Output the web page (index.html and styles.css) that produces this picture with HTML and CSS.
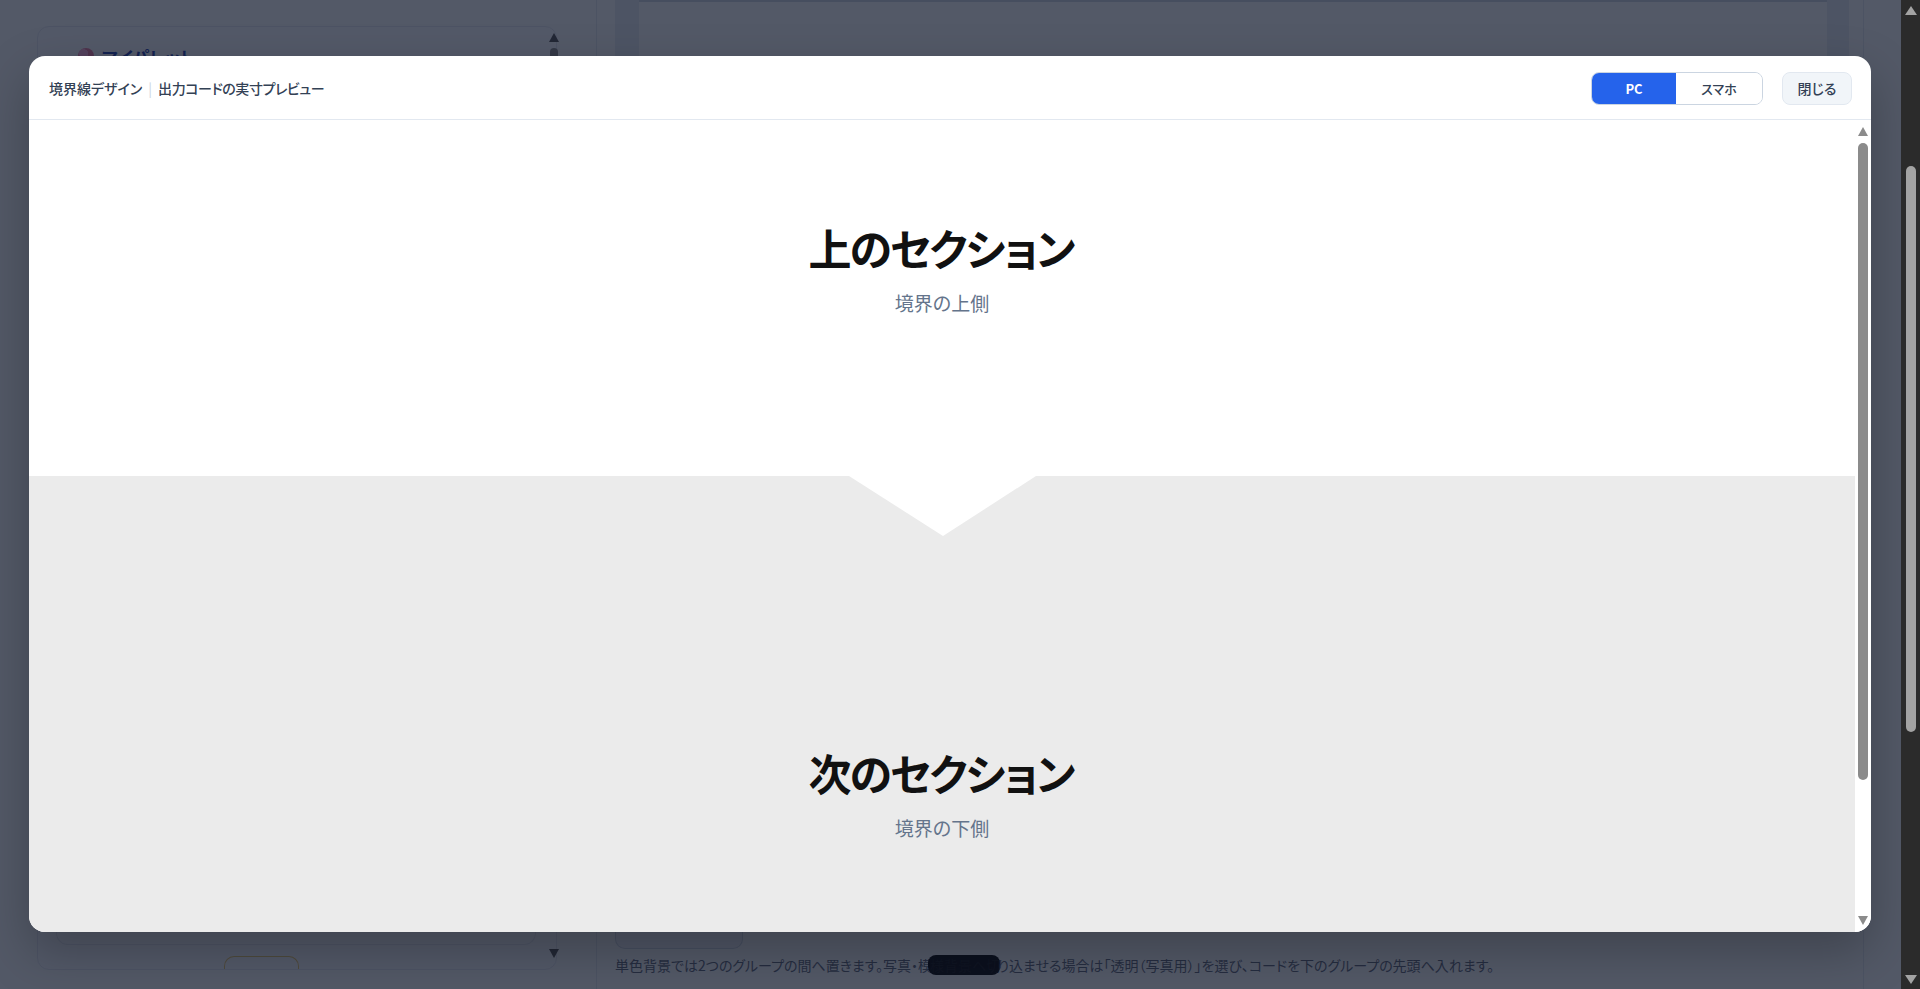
FILE: index.html
```html
<!DOCTYPE html>
<html lang="ja">
<head>
<meta charset="utf-8">
<title>境界線デザイン</title>
<link rel="stylesheet" href="styles.css">
</head>
<body>
<div class="app">
  <div class="page">
    <aside class="sidebar">
      <div class="panel">
        <div class="panel-head">
          <span class="palette-icon"></span>
          <span class="panel-title">マイパレット</span>
          <span class="panel-rule"></span>
        </div>
        <div class="panel-body">
          <div class="inner-box"></div>
        </div>
        <div class="panel-foot"><span class="tab"></span></div>
      </div>
      <div class="side-scroll">
        <span class="arr-up dark"></span>
        <span class="side-thumb"></span>
        <span class="grow"></span>
        <span class="arr-down dark"></span>
      </div>
    </aside>
    <main class="main">
      <div class="frame"><div class="frame-inner"></div></div>
      <div class="main-foot">
        <div class="ghost-btn"></div>
        <p class="note">単色背景では2つのグループの間へ置きます。写真・模<span class="pill">様背景へ切</span>り込ませる場合は「透明（写真用）」を選び、コードを下のグループの先頭へ入れます。</p>
      </div>
    </main>
    <div class="rightcol"></div>

    <div class="overlay"></div>

    <section class="modal">
      <header class="modal-head">
        <h1 class="modal-title">境界線デザイン<span class="sep">|</span><span class="title-b">出力コードの実寸プレビュー</span></h1>
        <div class="head-actions">
          <div class="seg">
            <button class="seg-btn active">PC</button>
            <button class="seg-btn">スマホ</button>
          </div>
          <button class="close-btn">閉じる</button>
        </div>
      </header>
      <div class="modal-body">
        <div class="preview">
          <div class="sec sec-top">
            <h2 class="sec-title">上のセクション</h2>
            <p class="sec-sub">境界の上側</p>
          </div>
          <div class="sec sec-bottom">
            <svg class="notch" width="187" height="60" viewBox="0 0 187 60"><polygon points="0,0 187,0 94,60" fill="#ffffff"/></svg>
            <h2 class="sec-title lower">次のセクション</h2>
            <p class="sec-sub">境界の下側</p>
          </div>
        </div>
        <div class="mscroll">
          <span class="arr-up"></span>
          <span class="mthumb"></span>
          <span class="grow"></span>
          <span class="arr-down"></span>
        </div>
      </div>
    </section>
  </div>
  <div class="bscroll">
    <span class="arr-up light"></span>
    <span class="bthumb"></span>
    <span class="grow"></span>
    <span class="arr-down light"></span>
  </div>
</div>
</body>
</html>
```

FILE: styles.css
```css
* { box-sizing: border-box; }
html, body { margin: 0; padding: 0; height: 100%; overflow: hidden; }
body {
  font-family: "Noto Sans CJK JP", "Noto Sans", sans-serif;
  font-feature-settings: "palt";
  background: #f8fafc;
}
.app { display: flex; width: 1920px; height: 989px; }
.page {
  position: relative;
  flex: 1;
  display: flex;
  height: 989px;
  background: #f8fafc;
  overflow: hidden;
}

/* ---------- underlying page ---------- */
.sidebar {
  width: 597px;
  flex: none;
  display: flex;
  padding: 26px 0 19px 37px;
  border-right: 1px solid #dfe5ee;
}
.panel {
  width: 520px;
  display: flex;
  flex-direction: column;
  border: 1px solid #e2e8f0;
  border-radius: 12px;
  background: #f9fbfd;
  padding: 18px 20px 0 40px;
}
.panel-head { display: flex; align-items: center; gap: 8px; height: 22px; }
.palette-icon {
  width: 16px; height: 16px; border-radius: 50%;
  background: radial-gradient(circle at 35% 35%, #f9a8d4 0 30%, #e879a0 31% 100%);
}
.panel-title { font-size: 17px; font-weight: 700; color: #1e40af; }
.panel-rule { flex: 1; height: 1px; background: #cbd5e1; margin-left: 8px; }
.panel-body { flex: 1; display: flex; flex-direction: column; justify-content: flex-end; }
.inner-box {
  height: 120px;
  margin-left: -22px;
  border: 1px solid #e2e8f0;
  border-top: none;
  border-radius: 0 0 12px 12px;
}
.panel-foot { height: 24px; display: flex; align-items: flex-end; padding-left: 146px; }
.tab {
  width: 75px; height: 13px;
  border: 1px solid #e8c66a;
  border-bottom: none;
  border-radius: 10px 10px 0 0;
}
.side-scroll {
  width: 14px;
  margin-left: -10px;
  display: flex;
  flex-direction: column;
  align-items: center;
  padding: 7px 0 12px;
}
.side-thumb { width: 8px; height: 60px; border-radius: 4px; background: #8b8b8b; margin-top: 6px; }
.grow { flex: 1; }

.arr-up, .arr-down { width: 0; height: 0; border-left: 5.5px solid transparent; border-right: 5.5px solid transparent; }
.arr-up { border-bottom: 9px solid #8b8b8b; }
.arr-down { border-top: 9px solid #8b8b8b; }
.arr-up.dark { border-bottom-color: #505050; }
.arr-down.dark { border-top-color: #505050; }
.arr-up.light { border-bottom-color: #a3a3a3; border-left-width: 6.5px; border-right-width: 6.5px; }
.arr-down.light { border-top-color: #a3a3a3; border-left-width: 6.5px; border-right-width: 6.5px; }

.main {
  flex: none;
  width: 1267px;
  display: flex;
  flex-direction: column;
  padding: 0 0 0 18px;
  border-right: 1px solid #dfe5ee;
}
.frame {
  height: 880px;
  width: 1234px;
  flex: none;
  background: #e4e9f2;
  padding: 0 22px 0 24px;
}
.frame-inner { height: 100%; background: #f8fafc; border-top: 2px solid #cbd5e1; }
.main-foot { flex: 1; }
.ghost-btn {
  width: 128px;
  height: 69px;
  border: 1px solid #cbd5e1;
  border-top: none;
  border-radius: 0 0 10px 10px;
  background: #eef2f7;
}
.note {
  margin: 6px 0 0 0;
  font-size: 14px;
  line-height: 20px;
  color: #5c6677;
  white-space: nowrap;
}
.pill { background: #000; color: #101010; border-radius: 8px; margin-left: -4px; padding-left: 2px; margin-right: -3px; }
.rightcol { flex: 1; }

.overlay {
  position: absolute;
  inset: 0;
  background: rgba(15, 23, 42, 0.71);
}

/* ---------- modal ---------- */
.modal {
  position: absolute;
  left: 29px;
  top: 56px;
  width: 1842px;
  height: 876px;
  background: #fff;
  border-radius: 16px;
  overflow: hidden;
  display: flex;
  flex-direction: column;
  box-shadow: 0 20px 50px rgba(0, 0, 0, 0.25);
}
.modal-head {
  height: 64px;
  flex: none;
  display: flex;
  align-items: center;
  justify-content: space-between;
  padding: 0 19px 0 20px;
  border-bottom: 1px solid #e2e8f0;
}
.modal-title {
  margin: 0;
  font-size: 14px;
  font-weight: 500;
  color: #334155;
  line-height: 20px;
}
.title-b { letter-spacing: -0.4px; }
.sep { color: #cbd5e1; margin: 0 6px; font-weight: 400; }
.head-actions { display: flex; align-items: center; gap: 19px; margin-top: 1px; }
.seg {
  display: flex;
  height: 33px;
  border: 1px solid #cbd5e1;
  border-radius: 8px;
  overflow: hidden;
}
.seg-btn {
  font-family: inherit;
  font-feature-settings: "palt";
  border: none;
  margin: 0;
  background: #fff;
  color: #334155;
  font-size: 13px;
  font-weight: 500;
  width: 86px;
  padding: 0;
}
.seg-btn.active { background: #2563eb; color: #fff; font-weight: 700; width: 84px; }
.close-btn {
  font-family: inherit;
  font-feature-settings: "palt";
  height: 33px;
  width: 70px;
  border: 1px solid #e2e8f0;
  border-radius: 8px;
  background: #f1f5f9;
  color: #334155;
  font-size: 14px;
  font-weight: 500;
  padding: 0;
}
.modal-body { flex: 1; display: flex; min-height: 0; }
.preview { flex: 1; overflow: hidden; display: flex; flex-direction: column; }
.sec { text-align: center; }
.sec-top { height: 356px; padding-top: 103px; background: #fff; }
.sec-bottom { flex: 1; background: #ebebeb; }
.notch { display: block; margin: 0 auto; }
.sec-title {
  margin: 0;
  font-size: 43px;
  font-weight: 700;
  line-height: 48px;
  color: #111;
  letter-spacing: -2px;
  text-indent: -2px;
}
.sec-title.lower { margin-top: 212px; }
.sec-sub {
  margin: 17px 0 0;
  font-size: 19px;
  line-height: 30px;
  color: #64748b;
}
.mscroll {
  width: 16px;
  flex: none;
  background: #fff;
  display: flex;
  flex-direction: column;
  align-items: center;
  padding: 7px 0 7px;
}
.mthumb { width: 10px; height: 637px; margin-top: 7px; border-radius: 5px; background: #8b8b8b; }

/* ---------- browser scrollbar ---------- */
.bscroll {
  width: 19px;
  flex: none;
  background: #2b2b2b;
  display: flex;
  flex-direction: column;
  align-items: center;
  padding: 6px 0 5px;
}
.bthumb { width: 10px; height: 566px; margin-top: 151px; border-radius: 5px; background: #a3a3a3; }
```
